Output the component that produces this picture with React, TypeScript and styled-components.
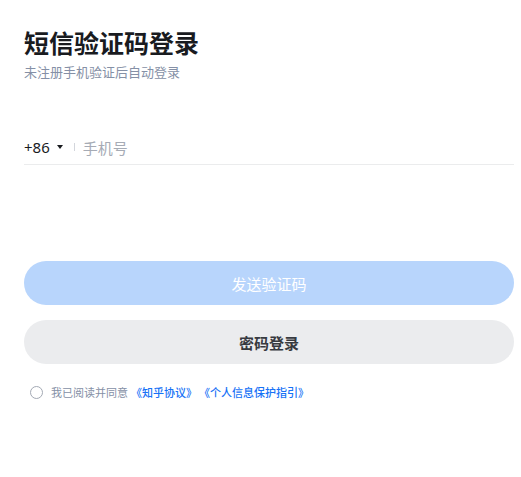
import React, { useState } from "react";
import styled, { createGlobalStyle } from "styled-components";

const GlobalStyle = createGlobalStyle`
  body {
    margin: 0;
    background: #fff;
    font-family: "Noto Sans", "Noto Sans CJK SC", sans-serif;
  }
`;

const Page = styled.div`
  width: 490px;
  padding: 24px 0 0 24px;
  box-sizing: content-box;
`;

const Title = styled.h1`
  margin: 0;
  font-size: 25px;
  line-height: 36px;
  font-weight: 700;
  color: #191b1f;
  font-family: "Noto Sans CJK SC", sans-serif;
`;

const Subtitle = styled.div`
  margin-top: 2px;
  font-size: 13px;
  line-height: 20px;
  color: #8590a6;
  font-family: "Noto Sans CJK SC", sans-serif;
`;

const PhoneRow = styled.div`
  margin-top: 48px;
  height: 34px;
  display: flex;
  align-items: center;
  border-bottom: 1px solid #ebeced;
`;

const Country = styled.button`
  display: flex;
  align-items: center;
  gap: 7px;
  padding: 0;
  border: none;
  background: none;
  font-family: "Noto Sans", sans-serif;
  font-size: 15px;
  color: #191b1f;
  cursor: pointer;
`;

const Caret = styled.span`
  width: 0;
  height: 0;
  border-left: 3.5px solid transparent;
  border-right: 3.5px solid transparent;
  border-top: 4px solid #191b1f;
`;

const Divider = styled.span`
  width: 1px;
  height: 8px;
  background: #d3d6dc;
  margin: 0 8px 0 11px;
`;

const PhoneInput = styled.input`
  flex: 1;
  border: none;
  outline: none;
  padding: 0;
  font-size: 15px;
  font-family: "Noto Sans CJK SC", sans-serif;
  color: #191b1f;
  &::placeholder {
    color: #a6abb5;
  }
`;

const Button = styled.button<{ $variant: "primary" | "secondary" }>`
  width: 100%;
  height: 44px;
  border: none;
  border-radius: 22px;
  font-family: "Noto Sans CJK SC", sans-serif;
  font-size: 15px;
  cursor: pointer;
  background: ${(p) => (p.$variant === "primary" ? "#b8d5fc" : "#ebecee")};
  color: ${(p) => (p.$variant === "primary" ? "#ffffff" : "#373a40")};
  font-weight: ${(p) => (p.$variant === "primary" ? 400 : 700)};
`;

const Actions = styled.div`
  margin-top: 96px;
  display: flex;
  flex-direction: column;
  gap: 15px;
`;

const Agreement = styled.label`
  margin-top: 20px;
  padding-left: 6px;
  display: flex;
  align-items: center;
  font-size: 11px;
  line-height: 16px;
  color: #8590a6;
  font-family: "Noto Sans CJK SC", sans-serif;
  cursor: pointer;
`;

const Radio = styled.span<{ $checked: boolean }>`
  width: 11px;
  height: 11px;
  border-radius: 50%;
  border: 1px solid #a3a9b4;
  margin-right: 8px;
  background: ${(p) => (p.$checked ? "#1772f6" : "transparent")};
`;

const Link = styled.a<{ $gap: number }>`
  color: #1772f6;
  font-weight: 500;
  text-decoration: none;
  margin-left: ${(p) => p.$gap}px;
`;

export default function App() {
  const [agreed, setAgreed] = useState(false);
  return (
    <Page>
      <GlobalStyle />
      <Title>短信验证码登录</Title>
      <Subtitle>未注册手机验证后自动登录</Subtitle>
      <PhoneRow>
        <Country>
          +86
          <Caret />
        </Country>
        <Divider />
        <PhoneInput placeholder="手机号" />
      </PhoneRow>
      <Actions>
        <Button $variant="primary">发送验证码</Button>
        <Button $variant="secondary">密码登录</Button>
      </Actions>
      <Agreement onClick={() => setAgreed(!agreed)}>
        <Radio $checked={agreed} />
        我已阅读并同意
        <Link $gap={3}>《知乎协议》</Link>
        <Link $gap={2}>《个人信息保护指引》</Link>
      </Agreement>
    </Page>
  );
}
